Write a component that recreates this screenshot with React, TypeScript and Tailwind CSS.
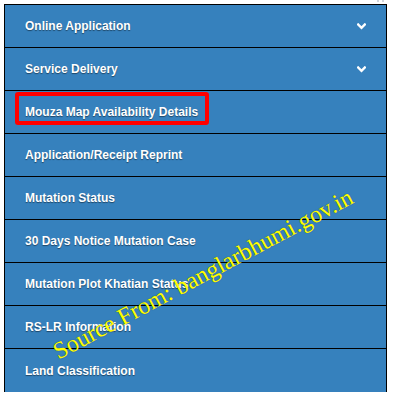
import React from "react";

const items: { label: string; chevron?: boolean; highlight?: boolean }[] = [
  { label: "Online Application", chevron: true },
  { label: "Service Delivery", chevron: true },
  { label: "Mouza Map Availability Details", highlight: true },
  { label: "Application/Receipt Reprint" },
  { label: "Mutation Status" },
  { label: "30 Days Notice Mutation Case" },
  { label: "Mutation Plot Khatian Status" },
  { label: "RS-LR Information" },
  { label: "Land Classification" },
];

function Chevron() {
  return (
    <svg width="9" height="7" viewBox="0 0 9 7" className="block">
      <path d="M1.2 1.5 L4.5 4.8 L7.8 1.5" fill="none" stroke="#ffffff" strokeWidth="2.4" strokeLinecap="square" strokeLinejoin="miter" />
    </svg>
  );
}

export default function App() {
  return (
    <div className="relative w-[393px] h-[398px] bg-white overflow-hidden" style={{ fontFamily: '"Liberation Sans", Arial, sans-serif' }}>
      <div className="absolute right-[9px] top-0 flex gap-[3px]">
        <span className="block w-[2px] h-[2px] bg-gray-300" />
        <span className="block w-[2px] h-[2px] bg-gray-300" />
      </div>
      <div className="pt-[4px] pl-[4px]">
        <div className="w-[383px] border-l border-r border-t border-black bg-[#3681bd]">
          {items.map((it, i) => (
            <div
              key={it.label}
              className={`relative flex items-center h-[43px] pl-[20px] pr-[20px] ${i < items.length - 1 ? "border-b border-black" : ""}`}
            >
              {it.highlight && (
                <div className="absolute left-[10px] top-[1px] w-[194px] h-[33px] border-[4px] border-[#ff0000] rounded-[3px]" />
              )}
              <span className="flex-1 text-white font-bold text-[12px] leading-none [text-shadow:0_1px_1px_rgba(0,0,0,0.45)]">
                {it.label}
              </span>
              {it.chevron && (
                <span>
                  <Chevron />
                </span>
              )}
            </div>
          ))}
        </div>
      </div>
      <div
        className="absolute left-[203px] top-[274px] -translate-x-1/2 -translate-y-1/2 -rotate-[28deg] whitespace-nowrap text-[#ffff00] text-[24px] leading-none [text-shadow:0_0_1px_rgba(0,0,0,0.5)]"
        style={{ fontFamily: '"Liberation Serif", "Times New Roman", serif' }}
      >
        Source From: banglarbhumi.gov.in
      </div>
    </div>
  );
}
